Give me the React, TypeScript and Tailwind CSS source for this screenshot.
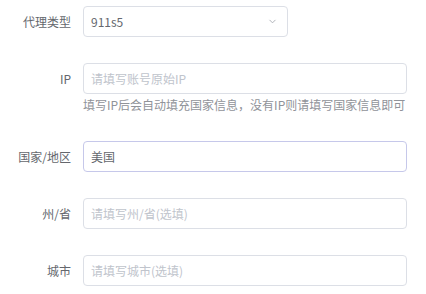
import React from "react";

const font = { fontFamily: '"Noto Sans CJK SC", "Noto Sans", sans-serif' };

function Label({ children }: { children: React.ReactNode }) {
  return (
    <div className="w-[71px] mr-[12px] shrink-0 text-right text-[12px] text-[#64676d] leading-[31px]">
      {children}
    </div>
  );
}

function Input({ placeholder, value, focused }: { placeholder?: string; value?: string; focused?: boolean }) {
  return (
    <div
      className={`w-[324px] h-[31px] rounded-[4px] border bg-white flex items-center px-[7px] text-[12px] ${
        focused ? "border-[#c6c8ea]" : "border-[#dcdfe6]"
      }`}
    >
      {value ? (
        <span className="text-[#64676d]">{value}</span>
      ) : (
        <span className="text-[#c0c4cc]">{placeholder}</span>
      )}
    </div>
  );
}

export default function App() {
  return (
    <div className="w-[426px] h-[294px] bg-white pt-[6px]" style={font}>
      <div className="flex flex-col gap-[26px]">
        <div className="flex items-start">
          <Label>代理类型</Label>
          <div className="w-[205px] h-[31px] rounded-[4px] border border-[#dcdfe6] flex items-center justify-between pl-[7px] pr-[10px] text-[12px] text-[#64676d]">
            <span>911s5</span>
            <svg width="9" height="9" viewBox="0 0 10 10" fill="none">
              <path d="M2 3.5 L5 6.5 L8 3.5" stroke="#a8abb2" strokeWidth="1" strokeLinecap="round" />
            </svg>
          </div>
        </div>
        <div className="flex items-start">
          <Label>IP</Label>
          <div className="flex flex-col">
            <Input placeholder="请填写账号原始IP" />
            <div className="h-[21px] pt-[3px] text-[12px] leading-[16px] text-[#909399]">
              填写IP后会自动填充国家信息，没有IP则请填写国家信息即可
            </div>
          </div>
        </div>
        <div className="flex items-start">
          <Label>国家/地区</Label>
          <Input value="美国" focused />
        </div>
        <div className="flex items-start">
          <Label>州/省</Label>
          <Input placeholder="请填写州/省(选填)" />
        </div>
        <div className="flex items-start">
          <Label>城市</Label>
          <Input placeholder="请填写城市(选填)" />
        </div>
      </div>
    </div>
  );
}
